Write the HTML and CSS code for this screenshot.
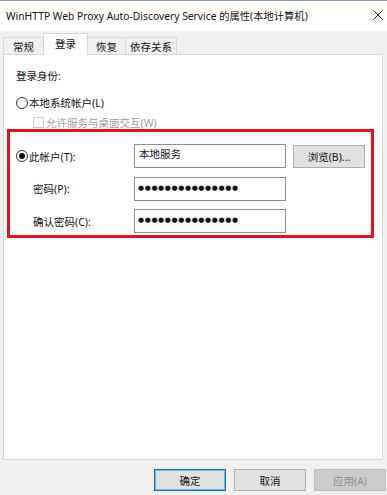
FILE: index.html
```html
<!DOCTYPE html>
<html lang="zh-CN">
<head>
<meta charset="utf-8">
<title>WinHTTP Web Proxy Auto-Discovery Service 的属性(本地计算机)</title>
<link rel="stylesheet" href="styles.css">
</head>
<body>
<div class="window">
  <div class="titlebar">
    <span class="title">WinHTTP Web Proxy Auto-Discovery Service 的属性(本地计算机)</span>
    <svg class="close" width="10" height="10" viewBox="0 0 10 10"><path d="M0.5 0.5 L9.5 9.5 M9.5 0.5 L0.5 9.5" stroke="#1a1a1a" stroke-width="1" fill="none"/></svg>
  </div>
  <div class="tabs">
    <div class="tab tab-1">常规</div>
    <div class="tab tab-2 tab-active">登录</div>
    <div class="tab tab-3">恢复</div>
    <div class="tab tab-4">依存关系</div>
  </div>
  <div class="panel">
    <div class="ident">登录身份:</div>
    <div class="opt-radio"><span class="radio"></span><span>本地系统帐户(L)</span></div>
    <div class="opt-check"><span class="checkbox"></span><span>允许服务与桌面交互(W)</span></div>
    <div class="highlight">
      <div class="acct">
        <div class="radio-cell"><span class="radio checked"></span><span>此帐户(T):</span></div>
        <div class="field">本地服务</div>
        <div class="btn browse">浏览(B)...</div>
        <div class="lbl">密码(P):</div>
        <div class="field pw">●●●●●●●●●●●●●●●</div>
        <div></div>
        <div class="lbl">确认密码(C):</div>
        <div class="field pw">●●●●●●●●●●●●●●●</div>
        <div></div>
      </div>
    </div>
  </div>
  <div class="buttons">
    <div class="btn btn-default">确定</div>
    <div class="btn">取消</div>
    <div class="btn btn-disabled">应用(A)</div>
  </div>
</div>
</body>
</html>
```
FILE: styles.css
```css
html, body {
  margin: 0;
  padding: 0;
}
body {
  background: #f0f0f0;
  font-family: "Noto Sans", "Noto Sans CJK SC", sans-serif;
  font-size: 10.5px;
  color: #111;
}
.window {
  width: 387px;
  height: 495px;
  overflow: hidden;
}
.titlebar {
  border-top: 1px solid #7f9fc4;
  background: #fff;
  display: flex;
  align-items: center;
  justify-content: space-between;
  padding: 0 4px 2px 6px;
  box-sizing: content-box;
  height: 28px;
}
.title {
  font-size: 10.3px;
  color: #111;
  white-space: nowrap;
}
.close {
  display: block;
  width: 10px;
  height: 10px;
}
.tabs {
  display: flex;
  align-items: flex-end;
  height: 21px;
  margin-top: 2px;
  padding-left: 3px;
}
.tab {
  height: 17px;
  box-sizing: border-box;
  border: 1px solid #d9d9d9;
  border-bottom: none;
  background: #f0f0f0;
  display: flex;
  align-items: center;
  justify-content: center;
  margin-left: -1px;
  white-space: nowrap;
}
.tab-1 { width: 41px; margin-left: 0; }
.tab-2 { width: 45px; }
.tab-3 { width: 39px; }
.tab-4 { width: 52px; }
.tab-active {
  height: 22px;
  margin-bottom: -1px;
  background: #fff;
  z-index: 1;
  padding-bottom: 2px;
}
.panel {
  margin-left: 3px;
  width: 380px;
  height: 406px;
  box-sizing: border-box;
  border: 1px solid #d9d9d9;
  background: #fff;
  padding-top: 13px;
}
.ident {
  height: 17px;
  line-height: 17px;
  padding-left: 12px;
}
.opt-radio {
  margin-top: 9px;
  height: 17px;
  display: flex;
  align-items: center;
  gap: 1px;
  padding-left: 12px;
}
.radio {
  width: 12px;
  height: 12px;
  box-sizing: border-box;
  border: 1px solid #333;
  border-radius: 50%;
  background: #fff;
  display: inline-flex;
  align-items: center;
  justify-content: center;
  flex: none;
}
.radio.checked::after {
  content: "";
  width: 6px;
  height: 6px;
  border-radius: 50%;
  background: #111;
}
.opt-check {
  margin-top: 4px;
  height: 14px;
  display: flex;
  align-items: center;
  gap: 2px;
  padding-left: 29px;
  color: #a0a0a0;
}
.checkbox {
  width: 11px;
  height: 11px;
  box-sizing: border-box;
  border: 1px solid #cccccc;
  background: #fff;
  flex: none;
}
.highlight {
  margin-left: 3px;
  width: 367px;
  box-sizing: border-box;
  border: 3px solid #e8101a;
  padding: 12px 0 2px 0;
}
.acct {
  display: grid;
  grid-template-columns: 124px 152px auto;
  grid-template-rows: 24px 25px 24px;
  row-gap: 8px;
  align-items: center;
}
.radio-cell {
  display: flex;
  align-items: center;
  gap: 1px;
  padding-left: 6px;
}
.lbl {
  padding-left: 23px;
}
.field {
  align-self: end;
  height: 24px;
  box-sizing: border-box;
  border: 1px solid #8f8f8f;
  background: #fff;
  padding: 1px 0 0 4px;
  line-height: 17px;
  white-space: nowrap;
}
.pw {
  font-family: "DejaVu Sans", sans-serif;
  font-size: 7px;
  letter-spacing: 0.6px;
  line-height: 18px;
  padding-left: 3px;
}
.btn {
  width: 72px;
  height: 22px;
  box-sizing: border-box;
  border: 1px solid #adadad;
  background: #e1e1e1;
  display: flex;
  align-items: center;
  justify-content: center;
  white-space: nowrap;
}
.browse {
  margin-left: 7px;
  height: 23px;
}
.buttons {
  display: flex;
  justify-content: flex-end;
  gap: 8px;
  margin-top: 9px;
  padding-right: 1px;
}
.btn-default {
  border: 1px solid #0078d7;
  box-shadow: inset 0 0 0 1px rgba(0, 120, 215, 0.45);
}
.btn-disabled {
  background: #cccccc;
  border-color: #bfbfbf;
  color: #8a8a8a;
}
```
